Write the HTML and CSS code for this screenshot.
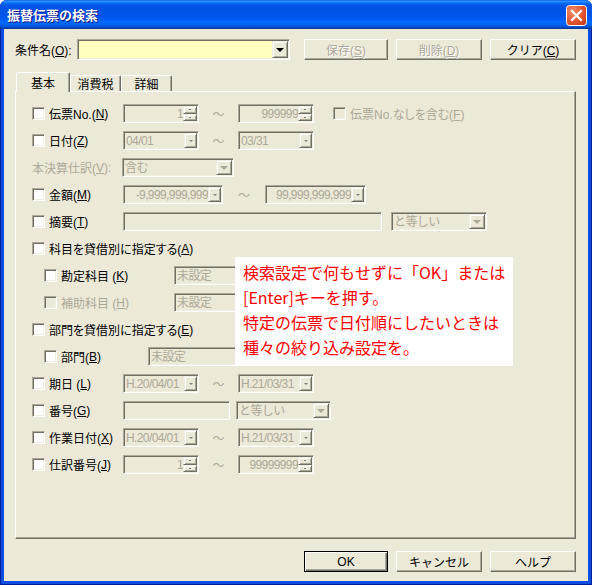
FILE: index.html
```html
<!DOCTYPE html>
<html lang="ja">
<head>
    <meta charset="UTF-8">
    <meta name="viewport" content="width=device-width, initial-scale=1.0">
    <title>振替伝票の検索</title>
    <link rel="stylesheet" href="styles.css">
</head>
<body>
    <div class="window">
        <!-- Title bar -->
        <div class="titlebar">
            <span class="title">振替伝票の検索</span>
            <span class="close">
                <svg width="21" height="21" viewBox="0 0 21 21">
                    <defs>
                        <radialGradient id="cg" cx="0.3" cy="0.3" r="0.9">
                            <stop offset="0" stop-color="#F08C6C"/>
                            <stop offset="0.6" stop-color="#E0542E"/>
                            <stop offset="1" stop-color="#C43A17"/>
                        </radialGradient>
                    </defs>
                    <rect x="0.5" y="0.5" width="20" height="20" rx="3" fill="url(#cg)" stroke="#fff"/>
                    <path d="M6 6 L15 15 M15 6 L6 15" stroke="#fff" stroke-width="2.2" stroke-linecap="square"/>
                </svg>
            </span>
        </div>

        <div class="client">
            <!-- Condition row -->
            <div class="cond-row">
                <span class="cond-label">条件名(<u>O</u>):</span>
                <div class="fld combo-cond"><span class="txt"></span><span class="drop big raised"><i class="tri dark"></i></span></div>
                <div class="btns">
                    <button class="btn dis">保存(<u>S</u>)</button>
                    <button class="btn dis w86">削除(<u>D</u>)</button>
                    <button class="btn w86">クリア(<u>C</u>)</button>
                </div>
            </div>

            <!-- Tabs -->
            <div class="tabs">
                <span class="tab on">基本</span>
                <span class="tab t2">消費税</span>
                <span class="tab t3">詳細</span>
            </div>

            <div class="panel">
                <div class="row">
                    <span class="lc"><span class="chk"></span>伝票No.(<u>N</u>)</span>
                    <div class="fld w76"><span class="txt r">1</span><span class="spin"><i class="raised"></i><i class="raised"></i></span></div>
                    <span class="tilde">～</span>
                    <div class="fld w76"><span class="txt r">999999</span><span class="spin"><i class="raised"></i><i class="raised"></i></span></div>
                    <span class="chk off ml19"></span><span class="gray">伝票No.なしを含む(<u>F</u>)</span>
                </div>
                <div class="row">
                    <span class="lc"><span class="chk"></span>日付(<u>Z</u>)</span>
                    <div class="fld w76"><span class="txt">04/01</span><span class="drop raised"><i class="tri sm"></i></span></div>
                    <span class="tilde">～</span>
                    <div class="fld w76"><span class="txt">03/31</span><span class="drop raised"><i class="tri sm"></i></span></div>
                </div>
                <div class="row">
                    <span class="lc w90 gray">本決算仕訳(<u>V</u>):</span>
                    <div class="fld w112"><span class="txt">含む</span><span class="drop big raised"><i class="tri"></i></span></div>
                </div>
                <div class="row">
                    <span class="lc"><span class="chk"></span>金額(<u>M</u>)</span>
                    <div class="fld w100"><span class="txt r">-9,999,999,999</span><span class="drop raised"><i class="tri sm"></i></span></div>
                    <span class="tilde wide">～</span>
                    <div class="fld w101"><span class="txt r">99,999,999,999</span><span class="drop raised"><i class="tri sm"></i></span></div>
                </div>
                <div class="row">
                    <span class="lc"><span class="chk"></span>摘要(<u>T</u>)</span>
                    <div class="fld w259"><span class="txt"></span></div>
                    <div class="fld w96 ml9"><span class="txt">と等しい</span><span class="drop big raised"><i class="tri"></i></span></div>
                </div>
                <div class="row">
                    <span class="lc"><span class="chk"></span>科目を貸借別に指定する(<u>A</u>)</span>
                </div>
                <div class="row">
                    <span class="lc sub w142"><span class="chk"></span>勘定科目 (<u>K</u>)</span>
                    <div class="fld w130"><span class="txt">未設定</span></div>
                </div>
                <div class="row">
                    <span class="lc sub w142 gray"><span class="chk off"></span>補助科目 (<u>H</u>)</span>
                    <div class="fld w130"><span class="txt">未設定</span></div>
                </div>
                <div class="row">
                    <span class="lc"><span class="chk"></span>部門を貸借別に指定する(<u>E</u>)</span>
                </div>
                <div class="row">
                    <span class="lc sub w116"><span class="chk"></span>部門(<u>B</u>)</span>
                    <div class="fld w130"><span class="txt">未設定</span></div>
                </div>
                <div class="row">
                    <span class="lc"><span class="chk"></span>期日 (<u>L</u>)</span>
                    <div class="fld w76"><span class="txt">H.20/04/01</span><span class="drop raised"><i class="tri sm"></i></span></div>
                    <span class="tilde">～</span>
                    <div class="fld w76"><span class="txt">H.21/03/31</span><span class="drop raised"><i class="tri sm"></i></span></div>
                </div>
                <div class="row">
                    <span class="lc"><span class="chk"></span>番号(<u>G</u>)</span>
                    <div class="fld w107"><span class="txt"></span></div>
                    <div class="fld w95 ml6"><span class="txt">と等しい</span><span class="drop big raised"><i class="tri"></i></span></div>
                </div>
                <div class="row">
                    <span class="lc"><span class="chk"></span>作業日付(<u>X</u>)</span>
                    <div class="fld w76"><span class="txt">H.20/04/01</span><span class="drop raised"><i class="tri sm"></i></span></div>
                    <span class="tilde">～</span>
                    <div class="fld w76"><span class="txt">H.21/03/31</span><span class="drop raised"><i class="tri sm"></i></span></div>
                </div>
                <div class="row">
                    <span class="lc"><span class="chk"></span>仕訳番号(<u>J</u>)</span>
                    <div class="fld w76"><span class="txt r">1</span><span class="spin"><i class="raised"></i><i class="raised"></i></span></div>
                    <span class="tilde">～</span>
                    <div class="fld w76"><span class="txt r">99999999</span><span class="spin"><i class="raised"></i><i class="raised"></i></span></div>
                </div>
            </div>

            <!-- Footer buttons -->
            <div class="footer">
                <button class="btn def">OK</button>
                <button class="btn w86">キャンセル</button>
                <button class="btn w86">ヘルプ</button>
            </div>
        </div>

        <!-- Annotation -->
        <div class="callout">
            検索設定で何もせずに「OK」または<br>
            [Enter]キーを押す。<br>
            特定の伝票で日付順にしたいときは<br>
            種々の絞り込み設定を。
        </div>
    </div>
</body>
</html>
```

FILE: styles.css
```css
body {
    margin: 0;
    background: #fff;
    font-family: "Liberation Sans", "Noto Sans CJK JP", sans-serif;
    font-size: 12px;
    color: #000;
}

.window {
    position: relative;
    width: 592px;
    height: 585px;
    display: flex;
    flex-direction: column;
    background: #0A4FE0;
    border-radius: 7px 7px 0 0;
    overflow: hidden;
    box-shadow: inset 1px 0 #001EA0, inset -1px 0 #001EA0, inset 0 -1px #001EA0;
}

.titlebar {
    height: 29px;
    flex: none;
    display: flex;
    align-items: flex-start;
    padding: 0 5px 0 7px;
    background: linear-gradient(to bottom, #0058EE 0%, #3593FF 4%, #288EFF 6%, #127DFF 8%, #036FFC 10%, #0262EE 14%, #0057E5 20%, #0054E3 24%, #0055EB 56%, #005BF5 66%, #026AFE 76%, #0062EF 86%, #0052D6 92%, #0040AB 97%, #003092 100%);
}

.title {
    flex: 1;
    line-height: 29px;
    color: #fff;
    font-family: "Noto Sans CJK JP", sans-serif;
    font-weight: bold;
    font-size: 13px;
    text-shadow: 1px 1px #0F1089;
}

.close {
    margin-top: 5px;
    width: 21px;
    height: 21px;
}

.client {
    flex: 1;
    margin: 0 4px 4px;
    padding: 10px 12px 9px 11px;
    background: #ECE9D8;
    display: flex;
    flex-direction: column;
    box-sizing: border-box;
}

/* condition row */
.cond-row {
    display: flex;
    align-items: center;
    height: 21px;
}

.cond-label {
    width: 62px;
    white-space: nowrap;
}

.btns {
    display: flex;
    gap: 8px;
    margin-left: 14px;
}

.btn {
    width: 84px;
    height: 21px;
    box-sizing: border-box;
    padding: 0;
    font-family: "Liberation Sans", "Noto Sans CJK JP", sans-serif;
    font-size: 12px;
    color: #000;
    background: #ECE9D8;
    border: 1px solid;
    border-color: #fff #716F64 #716F64 #fff;
    box-shadow: inset -1px -1px #ACA899;
}

.btn.w86 {
    width: 86px;
}

.btn.dis {
    color: #ACA899;
    text-shadow: 1px 1px #fff;
}

.btn.def {
    border-color: #000;
    box-shadow: inset 1px 1px #fff, inset -1px -1px #716F64, inset -2px -2px #ACA899;
}

/* tabs */
.tabs {
    display: flex;
    align-items: flex-end;
    height: 19px;
    margin-top: 12px;
    padding-left: 1px;
    position: relative;
    z-index: 1;
}

.tab {
    box-sizing: border-box;
    height: 16px;
    display: flex;
    align-items: center;
    justify-content: center;
    background: #ECE9D8;
    border: 1px solid;
    border-color: #fff #716F64 transparent #fff;
    border-bottom: none;
    border-radius: 2px 2px 0 0;
    box-shadow: inset -1px 0 #ACA899;
}

.tab.on {
    width: 54px;
    height: 20px;
    margin-bottom: -1px;
    padding-bottom: 1px;
}

.tab.t2 {
    width: 51px;
}

.tab.t3 {
    width: 51px;
}

.panel {
    height: 448px;
    box-sizing: border-box;
    padding: 8px 16px;
    border: 1px solid;
    border-color: #fff #716F64 #716F64 #fff;
    box-shadow: inset -1px -1px #ACA899;
}

.row {
    display: flex;
    align-items: center;
    height: 27px;
}

.lc {
    width: 91px;
    flex: none;
    display: flex;
    align-items: center;
    white-space: pre;
    font-feature-settings: "palt";
}

.lc.w90 { width: 90px; }
.lc.sub { padding-left: 12px; box-sizing: border-box; }
.lc.w142 { width: 142px; }
.lc.w116 { width: 116px; }

.gray {
    color: #ACA899;
    white-space: nowrap;
    font-feature-settings: "palt";
}

.chk {
    width: 13px;
    height: 13px;
    flex: none;
    box-sizing: border-box;
    margin-right: 4px;
    background: #fff;
    border: 1px solid;
    border-color: #ACA899 #fff #fff #ACA899;
    box-shadow: inset 1px 1px #716F64, inset -1px -1px #F1EFE2;
}

.chk.off {
    background: #ECE9D8;
}

.ml19 { margin-left: 19px; }
.ml9 { margin-left: 9px; }
.ml6 { margin-left: 6px; }

/* fields */
.fld {
    height: 19px;
    flex: none;
    box-sizing: border-box;
    padding: 1px;
    display: flex;
    align-items: stretch;
    color: #ACA899;
    background: #ECE9D8;
    border: 1px solid;
    border-color: #ACA899 #fff #fff #ACA899;
    box-shadow: inset 1px 1px #716F64, inset -1px -1px #F1EFE2;
}

.fld .txt {
    flex: 1;
    display: flex;
    align-items: center;
    padding: 0 0 0 1px;
    overflow: hidden;
    white-space: nowrap;
    line-height: 1;
    letter-spacing: -0.6px;
}

.fld .txt.r {
    justify-content: flex-end;
}

.combo-cond {
    width: 213px;
    height: 21px;
    background: #FFFFC0;
}

.w76 { width: 76px; }
.w95 { width: 95px; }
.w96 { width: 96px; }
.w100 { width: 100px; }
.w101 { width: 101px; }
.w107 { width: 107px; }
.w112 { width: 112px; }
.w130 { width: 130px; }
.w259 { width: 259px; }

.raised {
    box-sizing: border-box;
    background: #ECE9D8;
    border: 1px solid;
    border-color: #F1EFE2 #716F64 #716F64 #F1EFE2;
    box-shadow: inset 1px 1px #fff, inset -1px -1px #ACA899;
}

.drop {
    width: 13px;
    flex: none;
    display: flex;
    align-items: center;
    justify-content: center;
}

.drop.big {
    width: 16px;
}

.tri {
    width: 0;
    height: 0;
    border-left: 4px solid transparent;
    border-right: 4px solid transparent;
    border-top: 4px solid #ACA899;
}

.tri.dark {
    border-top-color: #000;
}

.tri.sm {
    border-left-width: 2px;
    border-right-width: 2px;
    border-top-width: 2px;
    border-top-color: #808080;
}

.spin {
    width: 14px;
    flex: none;
    display: flex;
    flex-direction: column;
}

.spin i {
    flex: 1;
    display: flex;
    align-items: center;
    justify-content: center;
}

.spin i::after {
    content: "";
    width: 2px;
    height: 1px;
    background: #808080;
}

.tilde {
    width: 39px;
    flex: none;
    text-align: center;
    color: #ACA899;
}

.tilde.wide {
    width: 42px;
}

.footer {
    display: flex;
    justify-content: flex-end;
    gap: 8px;
    margin-top: 12px;
}

/* annotation over the dialog */
.callout {
    position: absolute;
    left: 235px;
    top: 257px;
    width: 278px;
    height: 109px;
    box-sizing: border-box;
    padding: 3px 0 0 8px;
    background: #fff;
    color: #FF0000;
    font-family: "Noto Sans CJK JP", sans-serif;
    font-size: 16px;
    line-height: 25px;
    white-space: nowrap;
    z-index: 2;
}
```
